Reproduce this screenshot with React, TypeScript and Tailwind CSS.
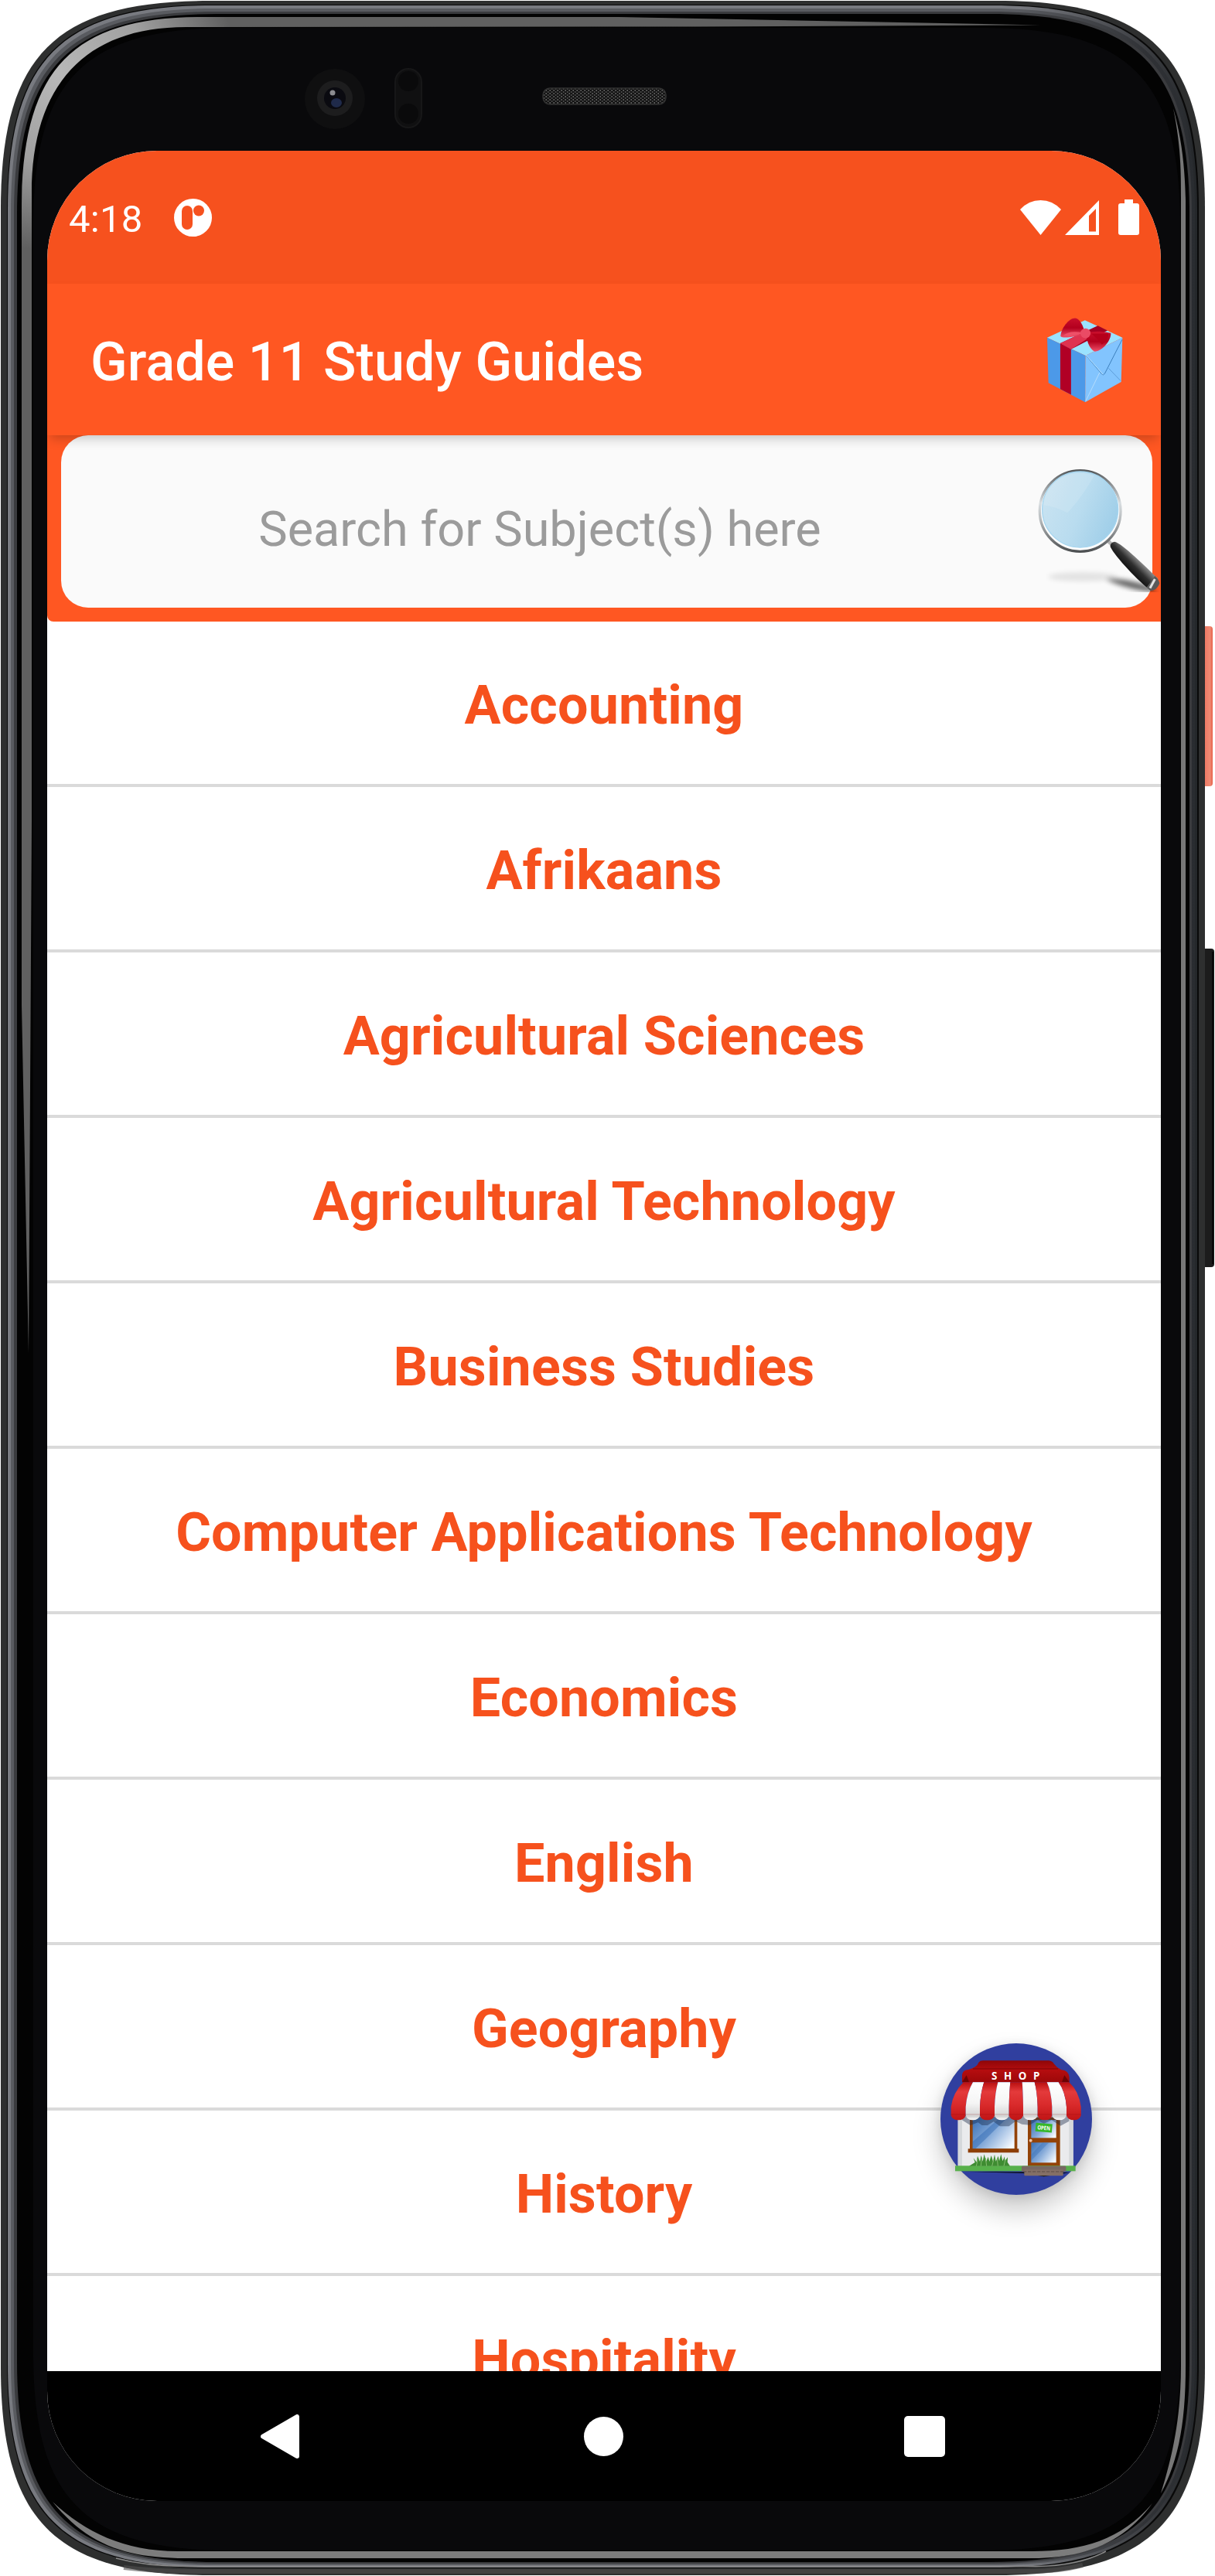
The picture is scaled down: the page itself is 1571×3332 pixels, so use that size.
/**
 * Grade 11 Study Guides: subject list shown inside a phone frame
 */

const SUBJECTS = [
  'Accounting',
  'Afrikaans',
  'Agricultural Sciences',
  'Agricultural Technology',
  'Business Studies',
  'Computer Applications Technology',
  'Economics',
  'English',
  'Geography',
  'History',
  'Hospitality',
];

// Soft-cornered outline used for every layer of the phone body
function shell(l: number, t: number, r: number, b: number, rad: number): string {
  const c = rad * 0.26;
  return [
    `M${l} ${t + rad}`,
    `C${l} ${t + c} ${l + c} ${t} ${l + rad} ${t}`,
    `H${r - rad}`,
    `C${r - c} ${t} ${r} ${t + c} ${r} ${t + rad}`,
    `V${b - rad}`,
    `C${r} ${b - c} ${r - c} ${b} ${r - rad} ${b}`,
    `H${l + rad}`,
    `C${l + c} ${b} ${l} ${b - c} ${l} ${b - rad}Z`,
  ].join(' ');
}

export default function App() {
  return (
    <div className="relative w-[1571px] h-[3332px] overflow-hidden bg-white pt-[195px] pl-[61px] font-[Roboto,sans-serif]">
      <PhoneFrame />

      {/* Screen */}
      <div className="relative flex flex-col w-[1440px] h-[3040px] rounded-[142px] overflow-hidden bg-white">
        <StatusBar />

        {/* App bar */}
        <header className="relative z-10 flex shrink-0 items-center justify-between h-[196px] pl-14 pr-[49px] bg-[#ff5722] shadow-[0_8px_14px_-4px_rgba(0,0,0,0.22)]">
          <h1 className="pt-1.5 text-[70px] leading-none font-medium tracking-[0.1px] text-white">
            Grade 11 Study Guides
          </h1>
          <GiftIcon />
        </header>

        {/* Search */}
        <div className="shrink-0 h-[241px] pl-[18px] pr-[11px] rounded-bl-[8px] bg-[#ff5722]">
          <div className="flex items-center h-[223px] rounded-[35px] bg-[#fafafa]">
            <span className="flex-1 pt-5 pr-[18px] text-center text-[63px] leading-none text-[#9b9b9b]">
              Search for Subject(s) here
            </span>
            <SearchIcon />
          </div>
        </div>

        {/* Subjects */}
        <div className="relative flex-1 overflow-hidden">
          <ul>
            {SUBJECTS.map(subject => (
              <li
                key={subject}
                className="flex items-center justify-center h-[214px] pt-[5px] border-b-4 border-[#dadada] text-[70px] leading-none font-bold tracking-[0.15px] text-[#f6511d]"
              >
                {subject}
              </li>
            ))}
          </ul>
          <button className="absolute right-[89px] bottom-[228px] size-[196px] rounded-full bg-[#303f9f] shadow-[0_20px_36px_rgba(0,0,0,0.22),0_2px_14px_rgba(0,0,0,0.1)]">
            <ShopIcon />
          </button>
        </div>

        <NavBar />
      </div>
    </div>
  );
}

function StatusBar() {
  return (
    <div className="flex shrink-0 items-center h-[172px] pl-7 pr-7 bg-[#f6511e] text-white">
      <span className="pt-1 text-[49px] leading-none tracking-[0.3px]">4:18</span>
      <svg className="ml-10" width="49" height="49" viewBox="0 0 49 49">
        <circle cx="24.5" cy="24.5" r="24.5" fill="#fff" />
        <rect x="10" y="9" width="14" height="31" rx="7" fill="#f6511e" />
        <circle cx="32" cy="15.500" r="7" fill="#f6511e" />
      </svg>
      <div className="flex items-center ml-auto">
        <svg width="53" height="45" viewBox="0 0 53 45">
          <path d="M0 12Q11 0 26.500 0T53 12L26.500 45Z" fill="#fff" />
        </svg>
        <svg className="ml-[5px]" width="44" height="45" viewBox="0 0 44 45">
          <path d="M44 0V45H0ZM40 11L31 20V40.500H40Z" fill="#fff" fillRule="evenodd" />
        </svg>
        <svg className="ml-[25px]" width="27" height="46" viewBox="0 0 27 46">
          <rect x="8" width="11" height="8" fill="#fff" />
          <rect y="5" width="27" height="41" rx="3" fill="#fff" />
        </svg>
      </div>
    </div>
  );
}

function NavBar() {
  return (
    <div className="flex shrink-0 items-center justify-between h-[168px] pl-[276px] pr-[279px] bg-black">
      <svg width="50" height="57" viewBox="0 0 50 57">
        <path d="M3 28.500L47 3V54Z" fill="#fff" stroke="#fff" strokeWidth="6" strokeLinejoin="round" />
      </svg>
      <div className="ml-[5px] size-[51px] rounded-full bg-white" />
      <div className="size-[53px] rounded-[5px] bg-white" />
    </div>
  );
}

function GiftIcon() {
  return (
    <svg width="99" height="111" viewBox="160 115 298 333">
      <defs>
        <linearGradient id="bow" x1="0" y1="0" x2="0" y2="1">
          <stop offset="0" stopColor="#c90f2c" />
          <stop offset="0.500" stopColor="#b3001e" />
          <stop offset="1" stopColor="#f0506a" />
        </linearGradient>
      </defs>
      <path d="M163 195L310 127L456 195L312 265Z" fill="#9be3ff" />
      <path d="M163 195L312 265L311 446L168 371Z" fill="#4c99e8" />
      <path d="M312 265L456 195L451 367L311 446Z" fill="#82c4fe" />
      <path d="M214 217L360 148L398 167L256 240Z" fill="#a30022" />
      <path d="M214 217L256 240V417L214 395Z" fill="#b10025" />
      <path d="M214 217L300 176L325 196L256 240Z" fill="#df3350" />
      <path d="M316 266L375 336Q381 344 387 335L455 202" fill="none" stroke="#3d7fbd" strokeWidth="3" />
      <path d="M314 262L380 338" stroke="#b9e2ff" strokeWidth="3" />
      <path d="M367 331L313 442" stroke="#b5dcfb" strokeWidth="3" />
      <path d="M402 314L449 363" stroke="#4b8ac7" strokeWidth="2" />
      <path d="M310 180C305 150 290 120 272 119C248 118 216 160 215 190C225 200 270 192 310 180Z" fill="url(#bow)" />
      <path d="M314 178C340 167 390 170 411 178C412 205 380 246 350 249C333 247 317 215 314 178Z" fill="url(#bow)" />
      <path d="M225 187Q250 165 302 176Q260 195 225 187Z" fill="#ee5068" />
      <path d="M336 180H402Q400 205 376 222Q360 200 336 180Z" fill="#b5001b" />
      <ellipse cx="312" cy="178" rx="20" ry="19" fill="#ea4b65" />
    </svg>
  );
}

function SearchIcon() {
  return (
    <svg className="relative shrink-0 mt-3 -mr-[11px]" width="166" height="171" viewBox="105 675 498 513">
      <defs>
        <linearGradient id="lens" x1="0" y1="0.300" x2="1" y2="0.700">
          <stop offset="0" stopColor="#c9e3f1" />
          <stop offset="0.500" stopColor="#b9dcef" />
          <stop offset="1" stopColor="#9dcde8" />
        </linearGradient>
        <linearGradient id="rim" x1="0" y1="0" x2="0" y2="1">
          <stop offset="0" stopColor="#55585a" />
          <stop offset="0.400" stopColor="#d8dde0" />
          <stop offset="0.600" stopColor="#b8bcbe" />
          <stop offset="1" stopColor="#4d5052" />
        </linearGradient>
        <linearGradient id="handle" x1="0" y1="1" x2="1" y2="0">
          <stop offset="0.350" stopColor="#050505" />
          <stop offset="0.500" stopColor="#2f2f2f" />
          <stop offset="0.650" stopColor="#a8a8a8" />
        </linearGradient>
        <filter id="soft" x="-20%" y="-100%" width="140%" height="300%">
          <feGaussianBlur stdDeviation="10" />
        </filter>
      </defs>
      <ellipse cx="300" cy="1128" rx="135" ry="18" fill="#000" opacity="0.090" filter="url(#soft)" />
      <path d="M390 1138Q450 1130 560 1165L590 1188Q480 1182 390 1138Z" fill="#000" opacity="0.600" filter="url(#soft)" />
      <path d="M390 982L418 1008" stroke="#b4b4b4" strokeWidth="14" />
      <circle cx="290" cy="873" r="157" fill="#fdfdfd" stroke="url(#rim)" strokeWidth="10" />
      <circle cx="290" cy="867" r="147" fill="url(#lens)" stroke="#a5d5ef" strokeWidth="4" />
      <path d="M148 850Q150 780 210 747Q280 710 345 735Q290 830 240 880Q190 855 148 850Z" fill="#fff" opacity="0.120" />
      <path d="M407 1012Q405 995 424 992C455 1000 545 1090 592 1135L562 1180C520 1150 425 1050 407 1012Z" fill="url(#handle)" />
      <path d="M580 1125Q597 1140 598 1155Q585 1183 562 1182L548 1169Z" fill="#595959" />
      <path d="M580 1137L561 1172" stroke="#e2e2e2" strokeWidth="9" />
    </svg>
  );
}

function ShopIcon() {
  const edges = [120, 177, 232, 289, 345, 400, 456, 512, 568, 624];
  const tops = [168, 205, 248, 302, 350, 396, 444, 492, 537, 578];

  return (
    <svg width="196" height="196" viewBox="79 98 588 588" className="overflow-visible">
      <defs>
        <linearGradient id="redStripe" x1="0" y1="0" x2="0" y2="1">
          <stop offset="0" stopColor="#b90f10" />
          <stop offset="0.250" stopColor="#e43a3b" />
          <stop offset="0.600" stopColor="#d92a2b" />
          <stop offset="1" stopColor="#c01415" />
        </linearGradient>
        <linearGradient id="whiteStripe" x1="0" y1="0" x2="0" y2="1">
          <stop offset="0" stopColor="#fff" />
          <stop offset="0.550" stopColor="#f5f5f5" />
          <stop offset="0.900" stopColor="#d4d4d4" />
          <stop offset="1" stopColor="#fff" />
        </linearGradient>
        <linearGradient id="sign" x1="0" y1="0" x2="0" y2="1">
          <stop offset="0" stopColor="#8e0608" />
          <stop offset="0.450" stopColor="#b50d0f" />
          <stop offset="1" stopColor="#9c0809" />
        </linearGradient>
        <linearGradient id="glass" x1="0" y1="0.200" x2="1" y2="0.800">
          <stop offset="0" stopColor="#4579bb" />
          <stop offset="0.450" stopColor="#82a8d8" />
          <stop offset="1" stopColor="#f4f9ff" />
        </linearGradient>
      </defs>
      <path d="M160 595L400 602L480 615L580 600Z" fill="#080808" />
      <rect x="147" y="380" width="447" height="195" fill="#eaebed" />
      <path d="M147 380H163V575H147ZM578 380H594V575H578Z" fill="#d5d8db" />
      <path d="M163 249V220Q166 201 188 200Q222 190 227 172Q232 165 244 165H500Q512 166 520 178Q530 192 548 201Q576 203 579 230V249Z" fill="url(#sign)" />
      <path d="M205 197H535" stroke="#7d0507" strokeWidth="3" />
      <path d="M163 249L180 222L190 249ZM579 249L560 222L550 249Z" fill="#6d0304" />
      <text x="277" y="238" fontSize="40" fontWeight="700" fill="#fff" textLength="187" lengthAdjust="spacing" fontFamily="Open Sans, sans-serif">
        SHOP
      </text>
      <rect x="193" y="385" width="184" height="125" fill="#934309" />
      <rect x="204" y="385" width="162" height="122" fill="url(#glass)" />
      <path d="M204 480L300 395H330L215 507H204Z" fill="#2d67b1" opacity="0.450" />
      <rect x="186" y="507" width="197" height="15" fill="#8d3e06" />
      <rect x="418" y="385" width="125" height="190" fill="#934309" />
      <rect x="431" y="395" width="97" height="70" fill="url(#glass)" />
      <rect x="431" y="483" width="97" height="78" fill="url(#glass)" />
      <path d="M431 530L475 483H500L431 553Z" fill="#2d67b1" opacity="0.350" />
      <circle cx="429" cy="475" r="6" fill="#f2c7ac" />
      <path d="M163 380H578V400L545 418L510 396L480 410L456 396L425 415L395 412L370 400L345 420H310L285 402L262 416H240L225 405L195 416L163 396Z" fill="#1a2c4b" opacity="0.420" />
      <g transform="rotate(5 480 426)">
        <rect x="448" y="409" width="64" height="33" fill="#35b82a" />
        <text x="455" y="434" fontSize="22" fontWeight="700" fill="#fff" textLength="50" lengthAdjust="spacingAndGlyphs" fontFamily="Open Sans, sans-serif">
          OPEN
        </text>
      </g>
      {edges.slice(0, -1).map((x, i) => {
        const next = edges[i + 1];
        const mid = x < 372 ? 290 : 285;
        return (
          <path
            key={x}
            d={`M${tops[i]} 249Q${x + (tops[i] - x) * 0.15} ${mid} ${x} 345V378Q${x + 5} 396 ${(x + next) / 2} 396Q${next - 5} 396 ${next} 378V345Q${next + (tops[i + 1] - next) * 0.15} ${mid} ${tops[i + 1]} 249Z`}
            fill={i % 2 === 0 ? 'url(#redStripe)' : 'url(#whiteStripe)'}
          />
        );
      })}
      <path d="M120 374H624" stroke="#800" strokeWidth="3" opacity="0.250" />
      <rect x="136" y="573" width="467" height="21" fill="#58b04b" />
      <path
        d="M190 574L213 560L207 543L219 559L223 535L232 557L237 532L243 556L249 528L256 558L264 538L269 557L276 533L283 556L289 529L294 556L303 535L307 555L314 528L320 555L328 537L329 555L340 540L339 559L349 574Z"
        fill="#3e8c31"
      />
      <path d="M218 574L224 548M236 574L239 545M258 574L254 543M279 574L286 547M302 574L299 545M325 574L331 549" stroke="#85bd70" strokeWidth="3" />
      <rect x="394" y="574" width="172" height="22" rx="4" fill="#776863" />
      <rect x="404" y="588" width="151" height="24" rx="3" fill="#846f66" />
      <path d="M400 596H558" stroke="#5a4b46" strokeWidth="3" strokeDasharray="13 5" />
    </svg>
  );
}

function PhoneFrame() {
  return (
    <svg className="absolute inset-0" width="1571" height="3332" viewBox="0 0 1571 3332">
      <defs>
        <linearGradient id="edge" x1="0" y1="0" x2="1" y2="0">
          <stop offset="0" stopColor="#787a80" />
          <stop offset="0.850" stopColor="#787a80" />
          <stop offset="0.960" stopColor="#3a3c40" />
          <stop offset="1" stopColor="#24272a" />
        </linearGradient>
        <linearGradient id="edgeInner" x1="0" y1="0" x2="1" y2="0">
          <stop offset="0" stopColor="#595b60" />
          <stop offset="0.850" stopColor="#595b60" />
          <stop offset="0.960" stopColor="#303236" />
          <stop offset="1" stopColor="#292c30" />
        </linearGradient>
        <radialGradient id="shine" gradientUnits="userSpaceOnUse" cx="75" cy="95" r="230">
          <stop offset="0" stopColor="#b8b8b8" />
          <stop offset="0.500" stopColor="#a0a0a0" />
          <stop offset="1" stopColor="#606060" />
        </radialGradient>
        <linearGradient id="coral" x1="0" y1="0" x2="1" y2="0">
          <stop offset="0" stopColor="#c9503c" />
          <stop offset="0.300" stopColor="#ee745f" />
          <stop offset="0.800" stopColor="#f08a73" />
          <stop offset="1" stopColor="#e7614a" />
        </linearGradient>
        <pattern id="mesh" width="5" height="4" patternUnits="userSpaceOnUse">
          <rect width="5" height="4" fill="#141414" />
          <circle cx="1.200" cy="1" r="0.900" fill="#6a6a6a" />
          <circle cx="3.700" cy="3" r="0.900" fill="#555" />
        </pattern>
      </defs>

      {/* Side buttons */}
      <rect x="1550" y="810" width="18" height="207" rx="4" fill="url(#coral)" />
      <rect x="1550" y="1227" width="20" height="412" rx="4" fill="#1c1c1c" />
      <path d="M1568 1231V1635" stroke="#080808" strokeWidth="2" />

      {/* Body, from the outer edge inwards */}
      <path d={shell(1, 1, 1558, 3331, 270)} fill="#2e2f2f" />
      <path d={shell(9, 6, 1550, 3322, 266)} fill="#090909" />
      <path d={shell(10, 7, 1548, 3321, 266)} fill="url(#edge)" />
      <path d={shell(14, 11, 1545, 3318, 264)} fill="url(#edgeInner)" />
      <path d={shell(18, 15, 1541, 3316, 262)} fill="#3a3b3e" />
      <path d={shell(22, 18, 1538, 3314, 260)} fill="#030303" />
      <path d={shell(43, 36, 1526, 3299, 255)} fill="#09090b" />

      {/* Reflections on the glass rim */}
      <path d="M28 1300V270C28 92 92 22 260 22H800L1345 32.500L900 34.500L240 35C110 35 41 110 41 250V1060L37 1750Z" fill="url(#shine)" />
      <path d="M1517 140C1527 190 1527 220 1527 260V3060C1527 3130 1515 3180 1501 3225C1525 3180 1533 3130 1533 3060V260C1532 215 1528 180 1517 140Z" fill="#777" />
      <path d="M68 3236C112 3290 160 3309 240 3309H1335C1405 3309 1455 3287 1490 3238C1450 3285 1400 3300 1335 3300H230C160 3300 110 3275 68 3236Z" fill="#7c7c7c" />
      <path d="M150 3309Q190 3319.500 240 3319.500H1340Q1395 3319 1430 3300" fill="none" stroke="#8a8a8a" strokeWidth="1.500" />
      <path d="M160 3321Q200 3326 250 3326H1330Q1370 3326 1400 3318" fill="none" stroke="#505050" strokeWidth="6" opacity="0.600" />

      {/* Camera, sensors and speaker */}
      <circle cx="433" cy="128" r="39" fill="#0f0f10" />
      <circle cx="433" cy="127" r="23" fill="#1d1d1e" />
      <circle cx="433" cy="127" r="14" fill="#0a0a10" />
      <ellipse cx="435" cy="133" rx="7" ry="6" fill="#1f2a4a" />
      <circle cx="430" cy="120" r="3.500" fill="#8c8c90" />
      <rect x="511" y="89" width="34" height="76" rx="17" fill="#101011" stroke="#171718" strokeWidth="2" />
      <circle cx="528" cy="105" r="13" fill="#0a0a0b" />
      <circle cx="528" cy="147" r="13" fill="#0a0a0b" />
      <rect x="702" y="114" width="159" height="21" rx="9" fill="url(#mesh)" stroke="#303030" strokeWidth="1.500" />
    </svg>
  );
}
